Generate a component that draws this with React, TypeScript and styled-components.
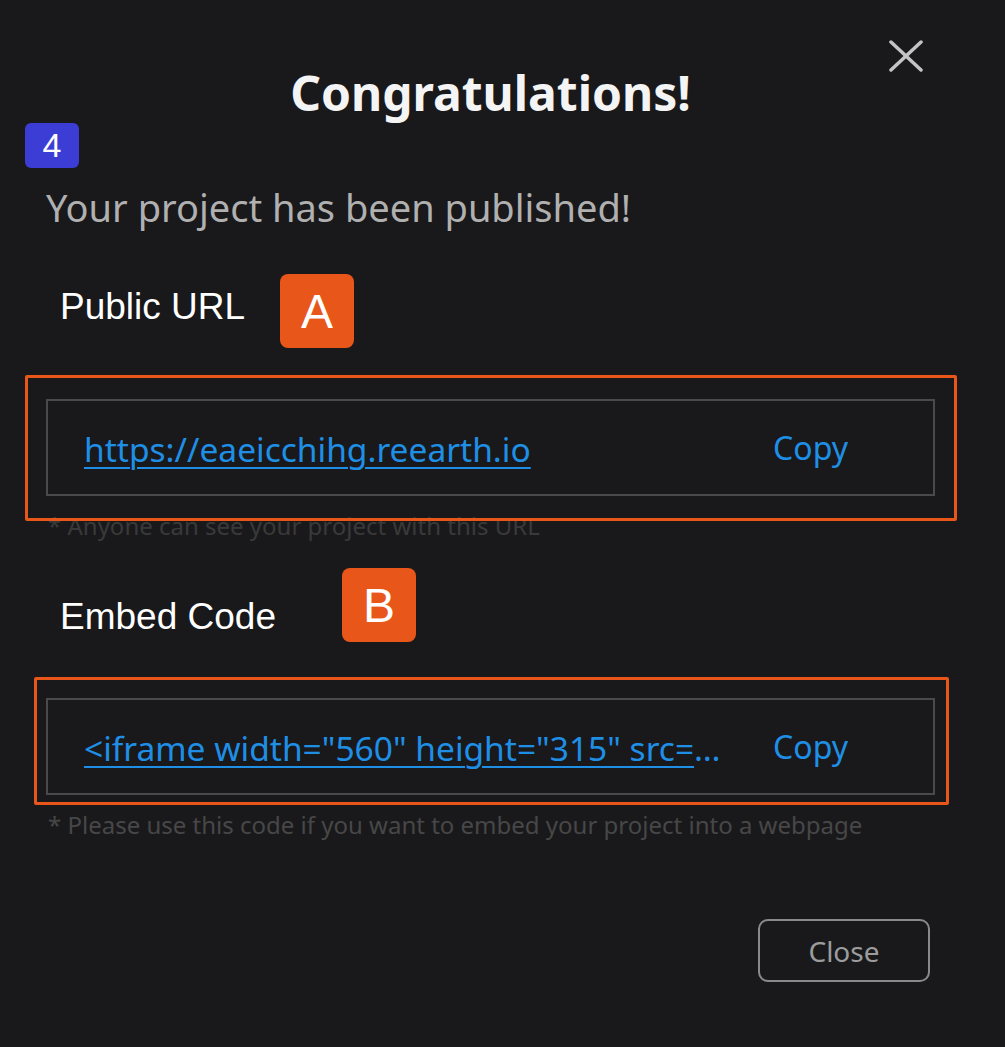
import React from "react";
import styled, { createGlobalStyle } from "styled-components";

const Global = createGlobalStyle`
  html, body { margin: 0; padding: 0; background: #19191c; }
  body { font-family: "Noto Sans", "Open Sans", sans-serif; }
  * { box-sizing: border-box; }
`;

const Dialog = styled.div`
  position: relative;
  width: 1005px;
  min-height: 1047px;
  background: #19191c;
  padding: 40px 70px 0 46px;
  display: flex;
  flex-direction: column;
`;

const Header = styled.div`
  display: grid;
  grid-template-columns: 1fr auto 1fr;
  align-items: start;
`;

const Title = styled.h1`
  grid-column: 2;
  margin: 29px 0 0;
  font-family: "Noto Sans", sans-serif;
  font-weight: 700;
  font-size: 48px;
  line-height: 1;
  color: #f4f4f4;
`;

const CloseIcon = styled.button`
  grid-column: 3;
  justify-self: end;
  margin-right: 11px;
  width: 36px;
  height: 32px;
  padding: 0;
  border: none;
  background: none;
  display: flex;
  cursor: pointer;
`;

const StepBadge = styled.div`
  position: absolute;
  left: 25px;
  top: 123px;
  width: 54px;
  height: 45px;
  border-radius: 6px;
  background: #3b3dd4;
  color: #ffffff;
  font-family: "Liberation Sans", Arial, sans-serif;
  font-size: 34px;
  display: flex;
  align-items: center;
  justify-content: center;
`;

const Subtitle = styled.p`
  margin: 71px 0 0;
  font-size: 38px;
  line-height: 1;
  color: #b0b0b0;
`;

const LabelRow = styled.div<{ $top: number }>`
  display: flex;
  align-items: flex-start;
  margin-top: ${(p) => p.$top}px;
  padding-left: 14px;
  height: 74px;
`;

const Label = styled.span<{ $offset: number }>`
  margin-top: ${(p) => p.$offset}px;
  font-family: "Liberation Sans", Arial, sans-serif;
  font-size: 37px;
  line-height: 1;
  color: #ffffff;
`;

const Marker = styled.div<{ $gap: number }>`
  margin-left: ${(p) => p.$gap}px;
  width: 74px;
  height: 74px;
  border-radius: 8px;
  background: #e8561a;
  color: #ffffff;
  font-family: "Liberation Sans", Arial, sans-serif;
  font-size: 48px;
  display: flex;
  align-items: center;
  justify-content: center;
`;

const Field = styled.div<{ $top: number }>`
  position: relative;
  margin-top: ${(p) => p.$top}px;
  height: 97px;
  border: 2px solid #4a4a4a;
  display: flex;
  align-items: center;
  gap: 52px;
  padding: 0 85px 0 36px;
`;

const Link = styled.a`
  flex: 1;
  min-width: 0;
  overflow: hidden;
  white-space: nowrap;
  text-overflow: ellipsis;
  font-size: 33.5px;
  line-height: 1.5;
  padding-top: 4px;
  color: #1f8fe6;
  text-decoration: underline;
  text-decoration-thickness: 2px;
  text-underline-offset: 5px;
`;

const CopyButton = styled.button`
  flex: none;
  border: none;
  background: none;
  padding: 0;
  font-family: "Noto Sans", sans-serif;
  font-size: 32px;
  line-height: 1;
  color: #1f8fe6;
  cursor: pointer;
`;

const Highlight = styled.div<{ $t: number; $l: number; $r: number; $b: number }>`
  position: absolute;
  top: ${(p) => p.$t}px;
  left: ${(p) => p.$l}px;
  right: ${(p) => p.$r}px;
  bottom: ${(p) => p.$b}px;
  border: 3px solid #e8561a;
  border-radius: 2px;
  z-index: 2;
  pointer-events: none;
`;

const Hint = styled.p<{ $tone: string }>`
  margin: 18px 0 0 2px;
  font-size: 24px;
  line-height: 1;
  color: ${(p) => p.$tone};
`;

const Footer = styled.div`
  display: flex;
  justify-content: flex-end;
  margin-top: 82px;
  padding-right: 5px;
`;

const CloseButton = styled.button`
  width: 172px;
  height: 63px;
  border: 2px solid #8a8a8a;
  border-radius: 10px;
  background: transparent;
  font-family: "Noto Sans", sans-serif;
  font-size: 28px;
  color: #9c9c9c;
  cursor: pointer;
`;

export default function App() {
  return (
    <>
      <Global />
      <Dialog>
        <Header>
          <Title>Congratulations!</Title>
          <CloseIcon aria-label="close">
            <svg width="36" height="32" viewBox="0 0 36 32">
              <line x1="3" y1="2" x2="33" y2="30" stroke="#c4c4c4" strokeWidth="3.5" strokeLinecap="round" />
              <line x1="33" y1="2" x2="3" y2="30" stroke="#c4c4c4" strokeWidth="3.5" strokeLinecap="round" />
            </svg>
          </CloseIcon>
        </Header>
        <StepBadge>4</StepBadge>
        <Subtitle>Your project has been published!</Subtitle>

        <LabelRow $top={48}>
          <Label $offset={14}>Public URL</Label>
          <Marker $gap={35}>A</Marker>
        </LabelRow>
        <Field $top={51}>
          <Link href="#">https://eaeicchihg.reearth.io</Link>
          <CopyButton>Copy</CopyButton>
          <Highlight $t={-26} $l={-23} $r={-24} $b={-27} />
        </Field>
        <Hint $tone="#393939">* Anyone can see your project with this URL</Hint>

        <LabelRow $top={30}>
          <Label $offset={30}>Embed Code</Label>
          <Marker $gap={66}>B</Marker>
        </LabelRow>
        <Field $top={56}>
          <Link href="#">{'<iframe width="560" height="315" src="https://eaeicchihg.reearth.io" frameborder="0"></iframe>'}</Link>
          <CopyButton>Copy</CopyButton>
          <Highlight $t={-23} $l={-14} $r={-16} $b={-12} />
        </Field>
        <Hint $tone="#474747">* Please use this code if you want to embed your project into a webpage</Hint>

        <Footer>
          <CloseButton>Close</CloseButton>
        </Footer>
      </Dialog>
    </>
  );
}
